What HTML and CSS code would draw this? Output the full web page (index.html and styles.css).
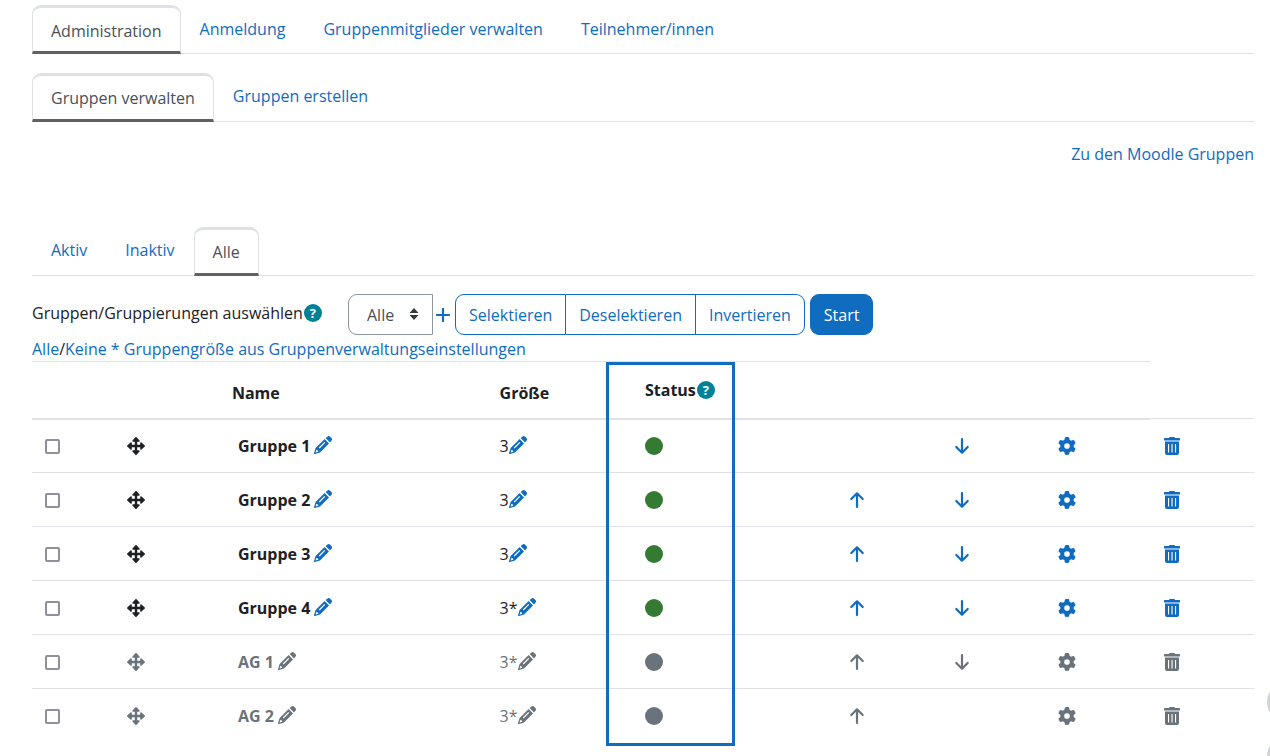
FILE: index.html
```html
<!DOCTYPE html>
<html lang="de">
<head>
<meta charset="utf-8">
<title>Gruppen verwalten</title>
<link rel="stylesheet" href="styles.css">
</head>
<body>
<svg class="sprite" aria-hidden="true">
  <symbol id="pencil" viewBox="0 0 18 18"><path fill-rule="evenodd" d="M10.600 3L15 7.400 6 16.400 .8 18a.6.6 0 0 1-.8-.8L1.600 12zM4.800 11.600l.8.8 5.600-5.600-.8-.8zM2.300 13.800l-.7 2.600 2.600-.7-.1-1.300-1.500-.1zM11.600 2L13.300.700a2.200 2.200 0 0 1 2.900 0l1.200 1.200a2.200 2.200 0 0 1 0 2.900L16 6.400z"/></symbol>
  <symbol id="gear" viewBox="0 0 512 512"><path d="M495.9 166.6c3.2 8.7 .5 18.4-6.4 24.6l-43.3 39.4c1.1 8.3 1.7 16.8 1.7 25.4s-.6 17.1-1.7 25.4l43.3 39.4c6.9 6.2 9.6 15.9 6.4 24.6c-4.4 11.9-9.7 23.3-15.8 34.3l-4.7 8.1c-6.6 11-14 21.4-22.1 31.2c-5.9 7.2-15.7 9.6-24.5 6.8l-55.7-17.7c-13.4 10.3-28.2 18.9-44 25.4l-12.5 57.1c-2 9.1-9 16.3-18.2 17.8c-13.8 2.3-28 3.5-42.5 3.5s-28.7-1.2-42.5-3.5c-9.2-1.5-16.2-8.7-18.2-17.8l-12.5-57.1c-15.8-6.5-30.6-15.1-44-25.4L83.1 425.9c-8.8 2.8-18.6 .3-24.5-6.8c-8.1-9.8-15.5-20.2-22.1-31.2l-4.7-8.1c-6.1-11-11.4-22.4-15.8-34.3c-3.2-8.7-.5-18.4 6.4-24.6l43.3-39.4C64.6 273.1 64 264.6 64 256s.6-17.1 1.7-25.4L22.4 191.2c-6.9-6.2-9.6-15.9-6.4-24.6c4.4-11.9 9.7-23.3 15.8-34.3l4.7-8.1c6.6-11 14-21.4 22.1-31.2c5.9-7.2 15.7-9.6 24.5-6.8l55.7 17.7c13.4-10.3 28.2-18.9 44-25.4l12.5-57.1c2-9.1 9-16.3 18.2-17.8C227.3 1.2 241.5 0 256 0s28.7 1.2 42.5 3.5c9.2 1.5 16.2 8.7 18.2 17.8l12.5 57.1c15.8 6.5 30.6 15.1 44 25.4l55.7-17.7c8.8-2.8 18.6-.3 24.5 6.8c8.1 9.8 15.5 20.2 22.1 31.2l4.7 8.1c6.1 11 11.4 22.4 15.8 34.3zM256 336a80 80 0 1 0 0-160 80 80 0 1 0 0 160z"/></symbol>
  <symbol id="move" viewBox="0 0 18 18"><path d="M9 3v12M3 9h12" stroke="currentColor" stroke-width="2.400"/><path d="M9 .8l2.900 3.200H6.100zM9 17.200l2.900-3.200H6.100zM.8 9l3.200 2.900V6.100zM17.200 9l-3.200 2.900V6.100z" stroke="currentColor" stroke-width="1.600" stroke-linejoin="round"/></symbol>
  <symbol id="up" viewBox="0 0 18 18"><path d="M9 16V2.500M3.300 8L9 2.300 14.700 8" fill="none" stroke="currentColor" stroke-width="2.200" stroke-linecap="round" stroke-linejoin="round"/></symbol>
  <symbol id="down" viewBox="0 0 18 18"><path d="M9 2v13.500M3.300 10L9 15.700 14.700 10" fill="none" stroke="currentColor" stroke-width="2.200" stroke-linecap="round" stroke-linejoin="round"/></symbol>
  <symbol id="trash" viewBox="0 0 18 18"><path fill-rule="evenodd" d="M6 1L6.500 0h5L12 1h4.300a.7.7 0 0 1 .7.700v1.200a.7.7 0 0 1-.7.700H1.700A.7.7 0 0 1 1 2.900V1.700A.7.7 0 0 1 1.700 1zM2 4.600h14V16a2 2 0 0 1-2 2H4a2 2 0 0 1-2-2zM5 7v8.500h1.100V7zM8.500 7v8.500h1.100V7zM12 7v8.500h1.100V7z"/></symbol>
  <symbol id="plus" viewBox="0 0 14 14"><path d="M7 1v12M1 7h12" fill="none" stroke="currentColor" stroke-width="2.200" stroke-linecap="round"/></symbol>
  <symbol id="sort" viewBox="0 0 10 12"><path d="M5 0l4.500 5h-9zM5 12L.5 7h9z"/></symbol>
  <symbol id="dot" viewBox="0 0 18 18"><circle cx="9" cy="9" r="9"/></symbol>
</svg>

<nav class="tabs">
  <a class="tab active" href="#">Administration</a>
  <a class="tab" href="#">Anmeldung</a>
  <a class="tab" href="#">Gruppenmitglieder verwalten</a>
  <a class="tab" href="#">Teilnehmer/innen</a>
</nav>
<nav class="tabs subtabs">
  <a class="tab active" href="#">Gruppen verwalten</a>
  <a class="tab" href="#">Gruppen erstellen</a>
</nav>
<p class="moodle-link"><a href="#">Zu den Moodle Gruppen</a></p>
<nav class="tabs filter">
  <a class="tab" href="#">Aktiv</a>
  <a class="tab" href="#">Inaktiv</a>
  <a class="tab active" href="#">Alle</a>
</nav>

<form class="toolbar">
  <div class="caption">
    <label for="grouping">Gruppen/Gruppierungen auswählen</label><button type="button" class="help" aria-label="Hilfe">?</button>
  </div>
  <div class="select-wrap">
    <select id="grouping"><option>Alle</option></select>
    <svg class="sort"><use href="#sort"/></svg>
  </div>
  <svg class="plus"><use href="#plus"/></svg>
  <div class="group">
    <button type="button">Selektieren</button>
    <button type="button">Deselektieren</button>
    <button type="button">Invertieren</button>
  </div>
  <button type="button" class="start">Start</button>
</form>
<p class="check-links"><a href="#">Alle</a>/<a href="#">Keine</a> <a href="#">* Gruppengröße aus Gruppenverwaltungseinstellungen</a></p>

<div class="table-wrap">
<table class="groups">
  <colgroup><col class="c-check"><col class="c-move"><col class="c-name"><col class="c-size"><col class="c-status"><col class="c-act"><col class="c-act"><col class="c-act"><col></colgroup>
  <thead>
    <tr><th></th><th></th><th>Name</th><th>Größe</th><th class="status-head"><div class="status-label">Status<button type="button" class="help" aria-label="Hilfe zu Status">?</button></div></th><th></th><th></th><th></th></tr>
  </thead>
  <tbody>
    <tr>
      <td><input type="checkbox" aria-label="Gruppe 1"></td><td><svg class="icon block"><use href="#move"/></svg></td>
      <td class="name">Gruppe 1 <a href="#" aria-label="Name bearbeiten"><svg class="icon"><use href="#pencil"/></svg></a></td>
      <td>3<a href="#" aria-label="Größe bearbeiten"><svg class="icon"><use href="#pencil"/></svg></a></td>
      <td><svg class="icon block dot"><use href="#dot"/></svg></td>
      <td></td>
      <td><a href="#" aria-label="Nach unten"><svg class="icon block"><use href="#down"/></svg></a></td>
      <td><a href="#" aria-label="Einstellungen"><svg class="icon block"><use href="#gear"/></svg></a></td>
      <td><a href="#" aria-label="Löschen"><svg class="icon block"><use href="#trash"/></svg></a></td>
    </tr>
    <tr>
      <td><input type="checkbox" aria-label="Gruppe 2"></td><td><svg class="icon block"><use href="#move"/></svg></td>
      <td class="name">Gruppe 2 <a href="#" aria-label="Name bearbeiten"><svg class="icon"><use href="#pencil"/></svg></a></td>
      <td>3<a href="#" aria-label="Größe bearbeiten"><svg class="icon"><use href="#pencil"/></svg></a></td>
      <td><svg class="icon block dot"><use href="#dot"/></svg></td>
      <td><a href="#" aria-label="Nach oben"><svg class="icon block"><use href="#up"/></svg></a></td>
      <td><a href="#" aria-label="Nach unten"><svg class="icon block"><use href="#down"/></svg></a></td>
      <td><a href="#" aria-label="Einstellungen"><svg class="icon block"><use href="#gear"/></svg></a></td>
      <td><a href="#" aria-label="Löschen"><svg class="icon block"><use href="#trash"/></svg></a></td>
    </tr>
    <tr>
      <td><input type="checkbox" aria-label="Gruppe 3"></td><td><svg class="icon block"><use href="#move"/></svg></td>
      <td class="name">Gruppe 3 <a href="#" aria-label="Name bearbeiten"><svg class="icon"><use href="#pencil"/></svg></a></td>
      <td>3<a href="#" aria-label="Größe bearbeiten"><svg class="icon"><use href="#pencil"/></svg></a></td>
      <td><svg class="icon block dot"><use href="#dot"/></svg></td>
      <td><a href="#" aria-label="Nach oben"><svg class="icon block"><use href="#up"/></svg></a></td>
      <td><a href="#" aria-label="Nach unten"><svg class="icon block"><use href="#down"/></svg></a></td>
      <td><a href="#" aria-label="Einstellungen"><svg class="icon block"><use href="#gear"/></svg></a></td>
      <td><a href="#" aria-label="Löschen"><svg class="icon block"><use href="#trash"/></svg></a></td>
    </tr>
    <tr>
      <td><input type="checkbox" aria-label="Gruppe 4"></td><td><svg class="icon block"><use href="#move"/></svg></td>
      <td class="name">Gruppe 4 <a href="#" aria-label="Name bearbeiten"><svg class="icon"><use href="#pencil"/></svg></a></td>
      <td>3*<a href="#" aria-label="Größe bearbeiten"><svg class="icon"><use href="#pencil"/></svg></a></td>
      <td><svg class="icon block dot"><use href="#dot"/></svg></td>
      <td><a href="#" aria-label="Nach oben"><svg class="icon block"><use href="#up"/></svg></a></td>
      <td><a href="#" aria-label="Nach unten"><svg class="icon block"><use href="#down"/></svg></a></td>
      <td><a href="#" aria-label="Einstellungen"><svg class="icon block"><use href="#gear"/></svg></a></td>
      <td><a href="#" aria-label="Löschen"><svg class="icon block"><use href="#trash"/></svg></a></td>
    </tr>
    <tr class="inactive">
      <td><input type="checkbox" aria-label="AG 1"></td><td><svg class="icon block"><use href="#move"/></svg></td>
      <td class="name">AG 1 <a href="#" aria-label="Name bearbeiten"><svg class="icon"><use href="#pencil"/></svg></a></td>
      <td>3*<a href="#" aria-label="Größe bearbeiten"><svg class="icon"><use href="#pencil"/></svg></a></td>
      <td><svg class="icon block dot"><use href="#dot"/></svg></td>
      <td><a href="#" aria-label="Nach oben"><svg class="icon block"><use href="#up"/></svg></a></td>
      <td><a href="#" aria-label="Nach unten"><svg class="icon block"><use href="#down"/></svg></a></td>
      <td><a href="#" aria-label="Einstellungen"><svg class="icon block"><use href="#gear"/></svg></a></td>
      <td><a href="#" aria-label="Löschen"><svg class="icon block"><use href="#trash"/></svg></a></td>
    </tr>
    <tr class="inactive">
      <td><input type="checkbox" aria-label="AG 2"></td><td><svg class="icon block"><use href="#move"/></svg></td>
      <td class="name">AG 2 <a href="#" aria-label="Name bearbeiten"><svg class="icon"><use href="#pencil"/></svg></a></td>
      <td>3*<a href="#" aria-label="Größe bearbeiten"><svg class="icon"><use href="#pencil"/></svg></a></td>
      <td><svg class="icon block dot"><use href="#dot"/></svg></td>
      <td><a href="#" aria-label="Nach oben"><svg class="icon block"><use href="#up"/></svg></a></td>
      <td></td>
      <td><a href="#" aria-label="Einstellungen"><svg class="icon block"><use href="#gear"/></svg></a></td>
      <td><a href="#" aria-label="Löschen"><svg class="icon block"><use href="#trash"/></svg></a></td>
    </tr>
  </tbody>
</table>
<div class="highlight"></div>
</div>
<div class="floating">
  <button type="button" class="round" aria-label="Nach oben scrollen"></button>
  <button type="button" class="round" aria-label="Hilfe anzeigen"></button>
</div>
</body>
</html>
```
FILE: styles.css
```css
* { box-sizing: border-box; }
body {
  min-height: 100vh;
  margin: 0;
  padding: 5px 16px 0 32px;
  background: #fff;
  color: #1d2125;
  font: 16px/24px "Open Sans", "Noto Sans", sans-serif;
}
.sprite { display: none; }
a { color: #0f6cbf; text-decoration: none; }
p { margin: 0; }
svg { fill: currentColor; }
button, select { font: inherit; }

.tabs {
  display: flex;
  height: 49px;
  box-shadow: inset 0 -1px #dee2e6;
}
.tab { padding: 12px 19px; }
.tab.active {
  padding: 11px 18px 8px;
  border: 1px solid #dee2e6;
  border-top-width: 3px;
  border-bottom: 3px solid #5f6163;
  border-radius: 9px 9px 0 0;
  background: #fff;
  color: #495057;
}
.subtabs { margin-top: 19px; }
.subtabs .tab { padding-top: 11px; }
.subtabs .tab.active { padding-top: 10px; }
.moodle-link { margin-top: 20px; text-align: right; }
.filter { margin-top: 61px; }
.filter .tab { padding-top: 11px; }
.filter .tab.active { padding-top: 10px; }

.toolbar {
  display: flex;
  align-items: center;
  margin-top: 18px;
}
.caption {
  display: flex;
  align-items: center;
  flex: 0 0 316px;
  padding-bottom: 4px;
}
.help {
  flex: none;
  width: 18px;
  height: 18px;
  margin-left: 1px;
  padding: 0;
  border: 0;
  border-radius: 50%;
  background: #008196;
  color: #fff;
  font-size: 13px;
  font-weight: 700;
  line-height: 18px;
}
.select-wrap { position: relative; }
select {
  appearance: none;
  width: 85px;
  height: 41px;
  padding: 0 18px;
  border: 1px solid #8f959e;
  border-radius: 9px 0 0 9px;
  background: #fff;
  color: #495057;
}
.sort {
  position: absolute;
  top: 14px;
  right: 14px;
  width: 10px;
  height: 12px;
  color: #343a40;
  pointer-events: none;
}
.plus {
  width: 14px;
  height: 14px;
  margin: 0 5px 0 3px;
  color: #0f6cbf;
}
.group { display: flex; }
.group button, .start {
  height: 41px;
  padding: 0 13px;
  border: 1px solid #0f6cbf;
  background: #fff;
  color: #0f6cbf;
}
.group button + button { border-left: 0; }
.group button:first-child { border-radius: 9px 0 0 9px; }
.group button:last-child { border-radius: 0 9px 9px 0; }
.start {
  margin-left: 5px;
  border-radius: 9px;
  background: #0f6cbf;
  color: #fff;
}
.check-links { margin-top: 2px; }

.table-wrap { position: relative; }
.groups {
  width: 100%;
  table-layout: fixed;
  border-collapse: collapse;
}
.c-check { width: 6.7%; }
.c-move { width: 8.6%; }
.c-name { width: 21.9%; }
.c-size { width: 11.9%; }
.c-status { width: 16.6%; }
.c-act { width: 8.6%; }
th, td {
  padding: 0 13px;
  border-top: 1px solid #dee2e6;
  text-align: left;
}
th {
  height: 57px;
  padding-top: 6px;
  border-bottom: 2px solid #dee2e6;
}
td { height: 54px; }
.status-head { padding: 0 13px; }
.status-label { display: flex; align-items: center; }
.name { padding-left: 19px; font-weight: 700; }
input[type="checkbox"] {
  display: block;
  appearance: none;
  width: 15px;
  height: 15px;
  margin: 2px 0 0;
  border: 2px solid #8f8f9d;
  border-radius: 2px;
  background: #fff;
}
.icon {
  width: 18px;
  height: 18px;
  vertical-align: -2px;
}
.block { display: block; }
.dot { color: #357a32; }
.inactive, .inactive a, .inactive .dot { color: #6a737b; }

.highlight {
  position: absolute;
  top: 1px;
  bottom: -3px;
  left: 47%;
  width: 129px;
  border: 3px solid #0f6cbf;
  pointer-events: none;
}
.floating {
  position: fixed;
  right: -37px;
  bottom: -20px;
  display: grid;
  gap: 14px;
}
.round {
  width: 40px;
  height: 40px;
  padding: 0;
  border: 0;
  border-radius: 50%;
  background: #ced4da;
}
```
